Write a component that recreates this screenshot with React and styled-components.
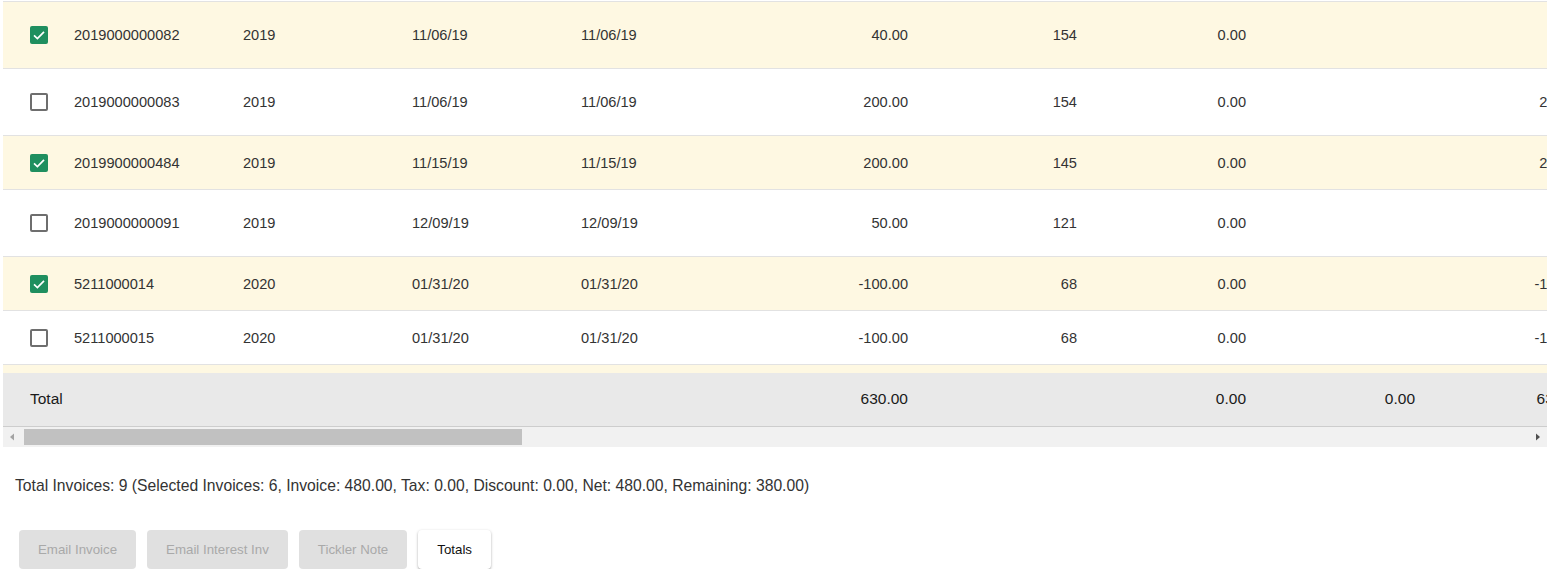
import React from "react";
import styled, { createGlobalStyle } from "styled-components";

const Global = createGlobalStyle`
  html, body { margin: 0; padding: 0; background: #fff; }
  body { font-family: "Liberation Sans", Arial, sans-serif; color: #333; }
`;

const COLS = "59px 169px 169px 169px 169px 182px 169px 169px 169px 169px";

const Page = styled.div`
  width: 1548px;
  padding-top: 1px;
`;

const GridWrap = styled.div`
  margin-left: 3px;
  width: 1544px;
  border-top: 1px solid #e2e2e2;
  overflow: hidden;
`;

const BodyViewport = styled.div`
  height: 371px;
  overflow: hidden;
`;

const Row = styled.div`
  display: grid;
  grid-template-columns: ${COLS};
  align-items: center;
  height: ${(p) => p.$h}px;
  background: ${(p) => (p.$sel ? "#fef8e2" : "#ffffff")};
  border-bottom: 1px solid #e2e2e2;
  font-size: 14.6px;
  color: #333;
`;

const Cell = styled.div`
  padding: 0 12px;
  white-space: nowrap;
  text-align: ${(p) => (p.$right ? "right" : "left")};
  overflow: visible;
`;

const BoxCell = styled.div`
  padding-left: 27px;
  display: flex;
  align-items: center;
`;

const Box = styled.span`
  box-sizing: border-box;
  width: 18px;
  height: 18px;
  border-radius: 2px;
  display: inline-flex;
  align-items: center;
  justify-content: center;
  background: ${(p) => (p.$on ? "#1f8f5f" : "#fff")};
  border: ${(p) => (p.$on ? "none" : "2px solid #6e6e6e")};
`;

const TotalRow = styled.div`
  display: grid;
  grid-template-columns: ${COLS};
  align-items: center;
  height: 52px;
  padding-bottom: 1px;
  background: #e9e9e9;
  border-bottom: 1px solid #cdcdcd;
  font-size: 15.5px;
  color: #1a1a1a;
`;

const TotalLabel = styled.div`
  padding-left: 27px;
  white-space: nowrap;
`;

const ScrollTrack = styled.div`
  display: flex;
  align-items: center;
  height: 20px;
  background: #f1f1f1;
`;

const ScrollArrow = styled.div`
  width: 18px;
  height: 20px;
  display: flex;
  align-items: center;
  justify-content: center;
  flex: none;
`;

const ScrollMiddle = styled.div`
  flex: 1;
  height: 100%;
  padding: 2px 3px;
  box-sizing: border-box;
  display: flex;
`;

const Thumb = styled.div`
  width: 498px;
  height: 100%;
  background: #c1c1c1;
`;

const Summary = styled.div`
  margin: 29px 0 0 15px;
  font-size: 15.7px;
  line-height: 20px;
  color: #333;
  white-space: nowrap;
`;

const ButtonBar = styled.div`
  display: flex;
  gap: 11px;
  margin: 34px 0 0 19px;
`;

const Button = styled.button`
  height: 39px;
  padding: 0 19px;
  border: none;
  border-radius: 4px;
  font-family: "Liberation Sans", Arial, sans-serif;
  font-size: 13.3px;
  cursor: ${(p) => (p.disabled ? "default" : "pointer")};
  background: ${(p) => (p.disabled ? "#e0e0e0" : "#fff")};
  color: ${(p) => (p.disabled ? "#a9a9a9" : "#111")};
  box-shadow: ${(p) =>
    p.disabled ? "none" : "0 1px 3px rgba(0,0,0,0.28), 0 1px 1px rgba(0,0,0,0.12)"};
`;

const rows = [
  { sel: true, h: 66, inv: "2019000000082", yr: "2019", d1: "11/06/19", d2: "11/06/19", amt: "40.00", days: "154", tax: "0.00", rem: "40.00" },
  { sel: false, h: 66, inv: "2019000000083", yr: "2019", d1: "11/06/19", d2: "11/06/19", amt: "200.00", days: "154", tax: "0.00", rem: "200.00" },
  { sel: true, h: 53, inv: "2019900000484", yr: "2019", d1: "11/15/19", d2: "11/15/19", amt: "200.00", days: "145", tax: "0.00", rem: "200.00" },
  { sel: false, h: 66, inv: "2019000000091", yr: "2019", d1: "12/09/19", d2: "12/09/19", amt: "50.00", days: "121", tax: "0.00", rem: "50.00" },
  { sel: true, h: 53, inv: "5211000014", yr: "2020", d1: "01/31/20", d2: "01/31/20", amt: "-100.00", days: "68", tax: "0.00", rem: "-100.00" },
  { sel: false, h: 53, inv: "5211000015", yr: "2020", d1: "01/31/20", d2: "01/31/20", amt: "-100.00", days: "68", tax: "0.00", rem: "-100.00" },
  { sel: true, h: 53, inv: "5211000016", yr: "2020", d1: "01/31/20", d2: "01/31/20", amt: "60.00", days: "68", tax: "0.00", rem: "60.00" },
];

function Check({ on }) {
  return (
    <Box $on={on}>
      {on && (
        <svg width="18" height="18" viewBox="0 0 18 18">
          <path d="M4 9.4 L7.4 12.6 L14 5.8" fill="none" stroke="#fff" strokeWidth="1.7" />
        </svg>
      )}
    </Box>
  );
}

export default function App() {
  return (
    <Page>
      <Global />
      <GridWrap>
        <BodyViewport>
          {rows.map((r, i) => (
            <Row key={i} $sel={r.sel} $h={r.h}>
              <BoxCell>
                <Check on={r.sel} />
              </BoxCell>
              <Cell>{r.inv}</Cell>
              <Cell>{r.yr}</Cell>
              <Cell>{r.d1}</Cell>
              <Cell>{r.d2}</Cell>
              <Cell $right>{r.amt}</Cell>
              <Cell $right>{r.days}</Cell>
              <Cell $right>{r.tax}</Cell>
              <Cell $right></Cell>
              <Cell $right>{r.rem}</Cell>
            </Row>
          ))}
        </BodyViewport>
        <TotalRow>
          <TotalLabel>Total</TotalLabel>
          <Cell />
          <Cell />
          <Cell />
          <Cell />
          <Cell $right>630.00</Cell>
          <Cell $right></Cell>
          <Cell $right>0.00</Cell>
          <Cell $right>0.00</Cell>
          <Cell $right>630.00</Cell>
        </TotalRow>
        <ScrollTrack>
          <ScrollArrow>
            <svg width="6" height="8" viewBox="0 0 6 8">
              <path d="M5 0.5 L1 4 L5 7.5 Z" fill="#a3a3a3" />
            </svg>
          </ScrollArrow>
          <ScrollMiddle>
            <Thumb />
          </ScrollMiddle>
          <ScrollArrow>
            <svg width="6" height="8" viewBox="0 0 6 8">
              <path d="M1 0.5 L5 4 L1 7.5 Z" fill="#505050" />
            </svg>
          </ScrollArrow>
        </ScrollTrack>
      </GridWrap>
      <Summary>
        Total Invoices: 9 (Selected Invoices: 6, Invoice: 480.00, Tax: 0.00, Discount: 0.00, Net: 480.00, Remaining: 380.00)
      </Summary>
      <ButtonBar>
        <Button disabled>Email Invoice</Button>
        <Button disabled>Email Interest Inv</Button>
        <Button disabled>Tickler Note</Button>
        <Button>Totals</Button>
      </ButtonBar>
    </Page>
  );
}
